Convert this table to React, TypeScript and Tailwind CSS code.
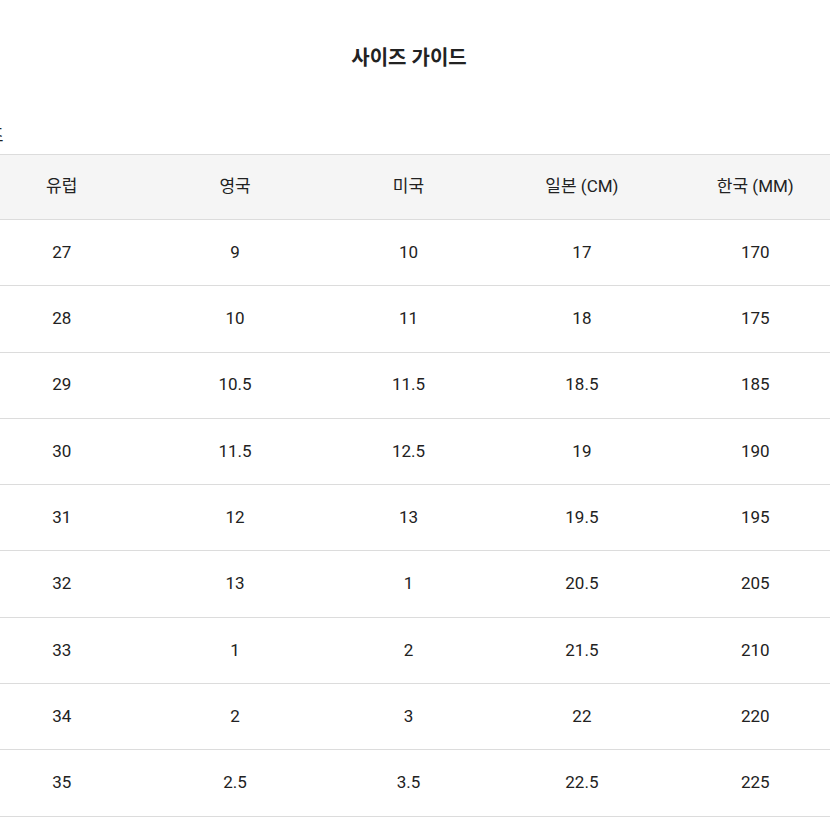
const headers = ["유럽", "영국", "미국", "일본 (CM)", "한국 (MM)"];

const rows = [
  ["27", "9", "10", "17", "170"],
  ["28", "10", "11", "18", "175"],
  ["29", "10.5", "11.5", "18.5", "185"],
  ["30", "11.5", "12.5", "19", "190"],
  ["31", "12", "13", "19.5", "195"],
  ["32", "13", "1", "20.5", "205"],
  ["33", "1", "2", "21.5", "210"],
  ["34", "2", "3", "22", "220"],
  ["35", "2.5", "3.5", "22.5", "225"],
];

export default function App() {
  return (
    <div className="h-[830px] w-[830px] overflow-hidden bg-white text-[#222] font-['Roboto','Noto_Sans_CJK_KR',sans-serif]">
      <div className="pt-[45px] pr-[12px] text-center text-[20px] font-bold leading-[26px]">
        사이즈 가이드
      </div>
      <div className="mt-[53px] ml-[-46px] text-[18px] leading-[24px]">사이즈</div>
      <div className="ml-[-25px] mt-[6px] w-[867px]">
        <div className="grid grid-cols-5 h-[66px] items-center border-y border-[#dcdcdc] bg-[#f5f5f5] text-[17px]">
          {headers.map((h) => (
            <div key={h} className="text-center">
              {h}
            </div>
          ))}
        </div>
        {rows.map((r) => (
          <div
            key={r[0]}
            className="grid grid-cols-5 h-[66.3px] items-center border-b border-[#dcdcdc] text-[17px]"
          >
            {r.map((c, i) => (
              <div key={i} className="text-center">
                {c}
              </div>
            ))}
          </div>
        ))}
      </div>
    </div>
  );
}
